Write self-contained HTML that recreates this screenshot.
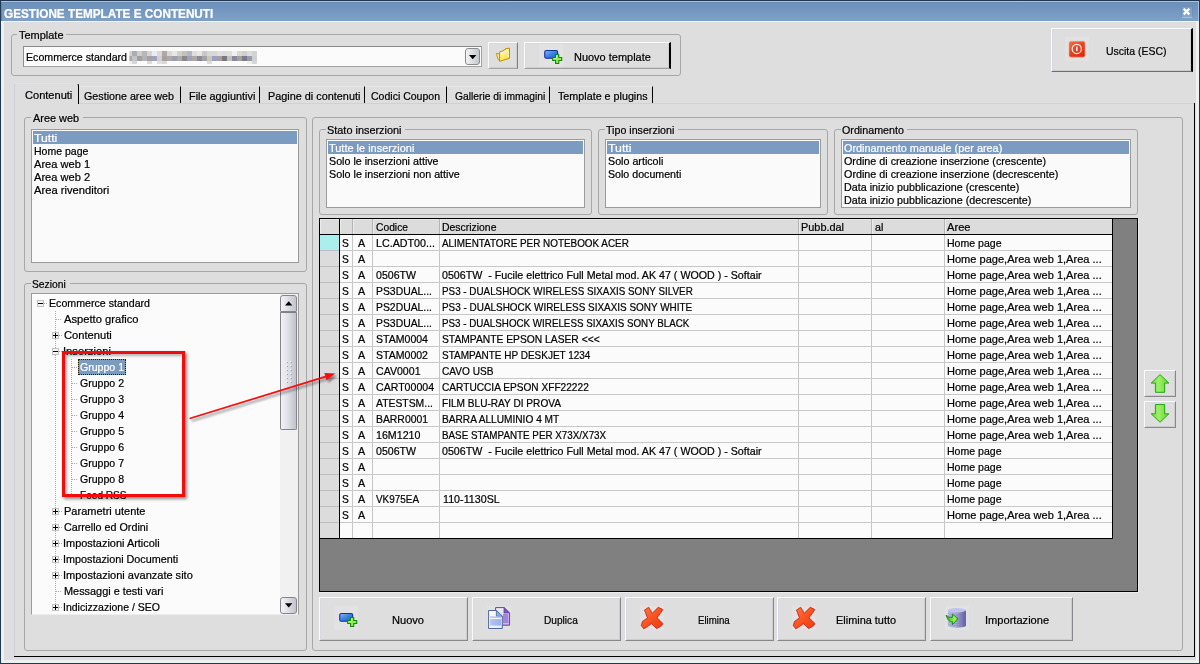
<!DOCTYPE html>
<html lang="it"><head><meta charset="utf-8"><title>Gestione template e contenuti</title>
<style>
html,body{margin:0;padding:0}
body{width:1200px;height:664px;overflow:hidden;background:#dedede;position:relative;font:11px "Liberation Sans",sans-serif;color:#000}
div,span,svg{position:absolute;box-sizing:border-box}
.t{white-space:pre;font:11px/13px "Liberation Sans",sans-serif;transform-origin:0 0;color:#000;-webkit-text-stroke:.22px currentColor}
.w{color:#fff}
.gb{border:1px solid #a7a7a7;border-radius:3px}
.gl{background:#dedede;height:12px}
.lb{background:#fafafa;border:1px solid #9b9b9b}
.sel{background:#7b9bc1;height:13px}
.btn{background:#dedede;border:1px solid;border-color:#fbfbfb #88888c #88888c #fbfbfb;box-shadow:inset 1px 1px 0 #d9d9e3,inset -1px -1px 0 #cdcdcd}
.btn.df{border-right:2px solid #000;border-bottom:1px solid #6e6e6e}
.ib{background:#e2e2e2}
.vl{width:1px;background:#c6c6c6}
.hl{height:1px;background:#c8c8c8}
.k{background:#000}
.tb{height:18px;top:85px;border-top:1px solid #e6e6ee;border-right:1px solid #000}
.dv{width:1px;background-image:linear-gradient(#ababab 50%,transparent 50%);background-size:1px 2px}
.dh{height:1px;background-image:linear-gradient(90deg,#ababab 50%,transparent 50%);background-size:2px 1px}
.pm{width:7px;height:7px;border:1px solid #c2c2c2;background:#f3f3f3}
.pm i{position:absolute;left:0;top:2px;width:5px;height:1px;background:#000}
.pm b{position:absolute;left:2px;top:0;width:1px;height:5px;background:#000}
</style></head><body>
<div style="left:0px;top:0px;width:1200px;height:664px;background:#213853"></div>
<div style="left:1px;top:1px;width:1198px;height:662px;background:#f0f0f1"></div>
<div style="left:4px;top:22px;width:1192px;height:638px;background:#dedede"></div>
<div style="left:1px;top:1px;width:1198px;height:1px;background:#a9c0de"></div>
<div style="left:1px;top:2px;width:1198px;height:19px;background:linear-gradient(#6a8fb9,#7fa1c7)"></div>
<div style="left:1px;top:2px;width:1px;height:19px;background:#5f86b3"></div>
<div style="left:1px;top:21px;width:1198px;height:1px;background:#f1f2f4"></div>
<div style="left:1198px;top:1px;width:1px;height:20px;background:#a9c0de"></div>
<span class="t w" style="left:3.6px;top:7px;transform:scaleX(0.979);font-size:12px;line-height:14px;font-weight:bold;">GESTIONE TEMPLATE E CONTENUTI</span>
<div style="left:1181px;top:6px;width:12px;height:12px;background:rgba(255,255,255,.1);border:1px solid rgba(80,110,150,.35);border-bottom-color:rgba(255,255,255,.25);border-radius:1px"></div>
<svg style="left:1181px;top:6px" width="12" height="12" viewBox="0 0 12 12"><path d="M2.7 2.75 L8.3 8.35 M8.3 2.75 L2.7 8.35" stroke="#fff" stroke-width="2.2" fill="none"/></svg>
<div class="gb" style="left:11px;top:34px;width:670px;height:42px;"></div>
<div class="gl" style="left:17px;top:29px;width:49px;height:12px;"></div>
<span class="t" style="left:19.1px;top:29px;transform:scaleX(0.997);">Template</span>
<div style="left:23px;top:46px;width:459px;height:21px;background:#fbfbfb;border:1px solid;border-color:#8a8a8a #a2a2a2 #a2a2a2 #8e8e8e"></div>
<span class="t" style="left:25.6px;top:51px;transform:scaleX(0.966);">Ecommerce standard</span>
<svg style="left:127px;top:51px" width="130" height="13"><rect x="2.4" y="0" width="2.6" height="5" fill="#d8cfc8"/><rect x="2.4" y="5" width="2.6" height="5" fill="#b0a8a4"/><rect x="2.4" y="10" width="2.6" height="3" fill="#f8ece0"/><rect x="5" y="0" width="5" height="5" fill="#a8aeb2"/><rect x="5" y="5" width="5" height="5" fill="#c0c4c8"/><rect x="5" y="10" width="5" height="3" fill="#d0d8e0"/><rect x="10" y="0" width="5" height="5" fill="#d0cecc"/><rect x="10" y="5" width="5" height="5" fill="#a89c9c"/><rect x="10" y="10" width="5" height="3" fill="#fbfbfb"/><rect x="15" y="0" width="5" height="5" fill="#b4b8b8"/><rect x="15" y="5" width="5" height="5" fill="#b0b4b4"/><rect x="15" y="10" width="5" height="3" fill="#fbfbfb"/><rect x="20" y="0" width="5" height="5" fill="#d4d4d4"/><rect x="20" y="5" width="5" height="5" fill="#a8a09c"/><rect x="20" y="10" width="5" height="3" fill="#dcdcdc"/><rect x="25" y="0" width="5" height="5" fill="#e8ecf0"/><rect x="25" y="5" width="5" height="5" fill="#9ea2bc"/><rect x="25" y="10" width="5" height="3" fill="#fbfbfb"/><rect x="30" y="0" width="5" height="5" fill="#dcd8d8"/><rect x="30" y="5" width="5" height="5" fill="#d0d0d0"/><rect x="30" y="10" width="5" height="3" fill="#e0e0dc"/><rect x="35" y="0" width="5" height="5" fill="#b0a8a8"/><rect x="35" y="5" width="5" height="5" fill="#a8a0a0"/><rect x="35" y="10" width="5" height="3" fill="#dcd8e0"/><rect x="40" y="0" width="5" height="5" fill="#d8d8d8"/><rect x="40" y="5" width="5" height="5" fill="#b0a8a0"/><rect x="40" y="10" width="5" height="3" fill="#fbfbfb"/><rect x="45" y="0" width="5" height="5" fill="#e8e8e0"/><rect x="45" y="5" width="5" height="5" fill="#98a0b0"/><rect x="45" y="10" width="5" height="3" fill="#fbfbfb"/><rect x="50" y="0" width="5" height="5" fill="#d0d0d0"/><rect x="50" y="5" width="5" height="5" fill="#b0aaa8"/><rect x="50" y="10" width="5" height="3" fill="#fbfbfb"/><rect x="55" y="0" width="5" height="5" fill="#c8c0b8"/><rect x="55" y="5" width="5" height="5" fill="#888a88"/><rect x="55" y="10" width="5" height="3" fill="#fbfbfb"/><rect x="60" y="0" width="5" height="5" fill="#b0b8c8"/><rect x="60" y="5" width="5" height="5" fill="#a0a0b8"/><rect x="60" y="10" width="5" height="3" fill="#fbfbfb"/><rect x="65" y="0" width="5" height="5" fill="#e0dce0"/><rect x="65" y="5" width="5" height="5" fill="#b0a8a0"/><rect x="65" y="10" width="5" height="3" fill="#fbfbfb"/><rect x="70" y="0" width="5" height="5" fill="#e8e8e0"/><rect x="70" y="5" width="5" height="5" fill="#8a8a9a"/><rect x="70" y="10" width="5" height="3" fill="#fbfbfb"/><rect x="75" y="0" width="5" height="5" fill="#c8c8c8"/><rect x="75" y="5" width="5" height="5" fill="#a0a4a8"/><rect x="75" y="10" width="5" height="3" fill="#fbfbfb"/><rect x="80" y="0" width="5" height="5" fill="#d8d8d8"/><rect x="80" y="5" width="5" height="5" fill="#c8c8b8"/><rect x="80" y="10" width="5" height="3" fill="#dcdcdc"/><rect x="85" y="0" width="5" height="5" fill="#d8d8d8"/><rect x="85" y="5" width="5" height="5" fill="#9aa0c0"/><rect x="85" y="10" width="5" height="3" fill="#fbfbfb"/><rect x="90" y="0" width="5" height="5" fill="#e0e0e0"/><rect x="90" y="5" width="5" height="5" fill="#a8a098"/><rect x="90" y="10" width="5" height="3" fill="#fbfbfb"/><rect x="95" y="0" width="5" height="5" fill="#dcdce0"/><rect x="95" y="5" width="5" height="5" fill="#787880"/><rect x="95" y="10" width="5" height="3" fill="#fbfbfb"/><rect x="100" y="0" width="5" height="5" fill="#e0e0d8"/><rect x="100" y="5" width="5" height="5" fill="#c0c4b8"/><rect x="100" y="10" width="5" height="3" fill="#fbfbfb"/><rect x="105" y="0" width="5" height="5" fill="#f0f0f0"/><rect x="105" y="5" width="5" height="5" fill="#8a88a0"/><rect x="105" y="10" width="5" height="3" fill="#fbfbfb"/><rect x="110" y="0" width="5" height="5" fill="#d8d8d4"/><rect x="110" y="5" width="5" height="5" fill="#a8a090"/><rect x="110" y="10" width="5" height="3" fill="#fbfbfb"/><rect x="115" y="0" width="5" height="5" fill="#d0d0cc"/><rect x="115" y="5" width="5" height="5" fill="#787890"/><rect x="115" y="10" width="5" height="3" fill="#fbfbfb"/><rect x="120" y="0" width="5" height="5" fill="#e0dcdc"/><rect x="120" y="5" width="5" height="5" fill="#90a0a8"/><rect x="120" y="10" width="5" height="3" fill="#f8ece4"/><rect x="125" y="0" width="5" height="5" fill="#d0d4d4"/><rect x="125" y="5" width="5" height="5" fill="#d0d0d0"/><rect x="125" y="10" width="5" height="3" fill="#d0d8e0"/></svg>
<div style="left:465px;top:48px;width:15px;height:17px;border:1px solid #8a8a8a;border-radius:3px;background:linear-gradient(90deg,#f2f2f6,#dcdce2 50%,#c6c6d0)"></div>
<svg style="left:469px;top:55px" width="8" height="5" viewBox="0 0 8 5"><path d="M0 0H7.4L3.7 4.2Z" fill="#000"/></svg>
<div class="btn" style="left:488px;top:42px;width:30px;height:27px;border-bottom-color:#a6a6a8;border-right-color:#808088"></div>
<svg style="left:495px;top:47px" width="16" height="16" viewBox="0 0 16 16">
<defs><linearGradient id="gF" x1="0" y1="0" x2=".6" y2="1"><stop offset="0" stop-color="#fffbe0"/><stop offset=".5" stop-color="#fff08c"/><stop offset="1" stop-color="#fddc2c"/></linearGradient></defs>
<path d="M1.3 6.3 L4.4 7 L4.4 13.4 L3.1 12.4 Z" fill="#fff2a8" stroke="#c48c0c" stroke-width=".9" stroke-linejoin="round"/>
<path d="M4.6 4.9 L8.7 3.7 L8.7 3 L10.5 2.5 L10.5 1.6 L14.5 1.2 L14.5 11.3 L4.6 14.3 Z" fill="url(#gF)" stroke="#c48c0c" stroke-width="1" stroke-linejoin="round"/>
<path d="M5.7 5.9 L11.6 4.2 L13.3 5.6 L13.4 10.4" fill="none" stroke="#fffbe4" stroke-width=".8" opacity=".9"/>
</svg>
<div class="btn df" style="left:524px;top:42px;width:147px;height:27px;border-bottom-color:#a0a0a2"></div>
<div class="ib" style="left:539px;top:44px;width:24px;height:23px;"></div>
<svg style="left:539px;top:43px" width="24" height="24" viewBox="0 0 24 24">
<defs><linearGradient id="gA" x1="0" y1="0" x2="1" y2="1"><stop offset="0" stop-color="#8ab8f4"/><stop offset=".5" stop-color="#3c80e0"/><stop offset="1" stop-color="#1a5cd4"/></linearGradient></defs>
<rect x="5.75" y="7.55" width="12.9" height="7.7" rx="1.5" fill="url(#gA)" stroke="#10309c" stroke-width="1.1"/>
<path d="M16.55 11.55H19.75V14.55H22.75V17.45H19.75V20.45H16.55V17.45H13.65V14.55H16.55Z" fill="#8cee52" stroke="#0e8a0c" stroke-width="1.1" stroke-linejoin="round"/>
<path d="M17.5 12.6v2.9h-2.8" fill="none" stroke="#c6ffa0" stroke-width=".8" opacity=".8"/>
</svg>
<span class="t" style="left:573.8px;top:51px;transform:scaleX(0.997);">Nuovo template</span>
<div class="btn df" style="left:1051px;top:28px;width:142px;height:44px;"></div>
<div class="ib" style="left:1065px;top:37px;width:24px;height:24px;"></div>
<svg style="left:1065px;top:37px" width="24" height="24" viewBox="0 0 24 24">
<defs><linearGradient id="gP" x1="0" y1="0" x2=".7" y2="1"><stop offset="0" stop-color="#f4714e"/><stop offset=".55" stop-color="#e8431e"/><stop offset="1" stop-color="#d8300c"/></linearGradient></defs>
<rect x="4" y="4.2" width="16" height="16" rx="1.8" fill="url(#gP)" stroke="#f2a894" stroke-width=".6"/>
<circle cx="11.8" cy="11.9" r="4.6" fill="none" stroke="#fff3ee" stroke-width="1.25"/>
<rect x="11.1" y="9.7" width="1.5" height="4.4" fill="#fff3ee"/>
</svg>
<span class="t" style="left:1105.6px;top:45px;transform:scaleX(0.952);">Uscita (ESC)</span>
<div style="left:14px;top:104px;width:1px;height:553px;background:#d0d0dc"></div>
<div style="left:79px;top:103px;width:1116px;height:1px;background:#d0d0dc"></div>
<div class="k" style="left:1194px;top:103px;width:1px;height:554px;"></div>
<div class="k" style="left:14px;top:656px;width:1181px;height:1px;"></div>
<div style="left:14px;top:83px;width:65px;height:21px;background:#dedede;border-top:1px solid #e2e2ec;border-left:1px solid #d0d0dc;border-right:1px solid #000;border-radius:3px 3px 0 0"></div>
<span class="t" style="left:24.6px;top:89px;transform:scaleX(1.005);">Contenuti</span>
<div class="tb" style="left:79px;top:86px;width:102px;height:17px;"></div>
<span class="t" style="left:83.6px;top:90px;transform:scaleX(0.975);">Gestione aree web</span>
<div class="tb" style="left:181px;top:86px;width:79px;height:17px;"></div>
<span class="t" style="left:188.6px;top:90px;transform:scaleX(0.986);">File aggiuntivi</span>
<div class="tb" style="left:260px;top:86px;width:105px;height:17px;"></div>
<span class="t" style="left:267.6px;top:90px;transform:scaleX(0.987);">Pagine di contenuti</span>
<div class="tb" style="left:365px;top:86px;width:82px;height:17px;"></div>
<span class="t" style="left:370.6px;top:90px;transform:scaleX(0.956);">Codici Coupon</span>
<div class="tb" style="left:447px;top:86px;width:103px;height:17px;"></div>
<span class="t" style="left:454.6px;top:90px;transform:scaleX(0.935);">Gallerie di immagini</span>
<div class="tb" style="left:550px;top:86px;width:103px;height:17px;"></div>
<span class="t" style="left:558.0px;top:90px;transform:scaleX(0.977);">Template e plugins</span>
<div class="gb" style="left:24px;top:117px;width:283px;height:155px;"></div>
<div class="gl" style="left:31px;top:111px;width:52px;height:12px;"></div>
<span class="t" style="left:32.6px;top:112px;transform:scaleX(0.99);">Aree web</span>
<div class="lb" style="left:31px;top:129px;width:268px;height:134px;"></div>
<div class="sel" style="left:33px;top:131px;width:264px;height:13px;"></div>
<span class="t w" style="left:34.2px;top:132px;transform:scaleX(1.11);">Tutti</span>
<span class="t" style="left:34.2px;top:145px;transform:scaleX(0.957);">Home page</span>
<span class="t" style="left:34.2px;top:158px;transform:scaleX(1.009);">Area web 1</span>
<span class="t" style="left:34.2px;top:171px;transform:scaleX(1.009);">Area web 2</span>
<span class="t" style="left:34.2px;top:184px;transform:scaleX(1.016);">Area rivenditori</span>
<div class="gb" style="left:24px;top:283px;width:283px;height:368px;"></div>
<div class="gl" style="left:31px;top:277px;width:39px;height:12px;"></div>
<span class="t" style="left:32.1px;top:278px;transform:scaleX(0.937);">Sezioni</span>
<div class="lb" style="left:31px;top:293px;width:268px;height:322px;background:#fbfbfb;border-bottom-color:#ededed"></div>
<div style="left:280px;top:294px;width:18px;height:320px;background:#f1f1f1"></div>
<div style="left:280px;top:295px;width:17px;height:17px;border:1px solid #86868a;border-radius:3px 3px 1px 1px;background:linear-gradient(90deg,#f4f4f8,#dcdce2 50%,#c4c4ce)"></div>
<svg style="left:285px;top:301px" width="8" height="5" viewBox="0 0 8 5"><path d="M0 4.4H7.4L3.7 0.2Z" fill="#000"/></svg>
<div style="left:280px;top:597px;width:17px;height:17px;border:1px solid #86868a;border-radius:3px;background:linear-gradient(90deg,#f4f4f8,#dcdce2 50%,#c4c4ce)"></div>
<svg style="left:285px;top:603px" width="8" height="5" viewBox="0 0 8 5"><path d="M0 0.2H7.4L3.7 4.4Z" fill="#000"/></svg>
<div style="left:280px;top:312px;width:17px;height:118px;border:1px solid #86868a;border-top:1px solid #808084;border-radius:1px 1px 2px 2px;background:linear-gradient(90deg,#f2f2f6,#e0e0e8 45%,#c2c2cc)"></div>
<svg style="left:286px;top:361px" width="7" height="23" shape-rendering="crispEdges"><rect x="0" y="0" width="1" height="1" fill="#fff"/><rect x="1" y="1" width="1" height="1" fill="#9a9aa4"/><rect x="4" y="0" width="1" height="1" fill="#fff"/><rect x="5" y="1" width="1" height="1" fill="#9a9aa4"/><rect x="0" y="4" width="1" height="1" fill="#fff"/><rect x="1" y="5" width="1" height="1" fill="#9a9aa4"/><rect x="4" y="4" width="1" height="1" fill="#fff"/><rect x="5" y="5" width="1" height="1" fill="#9a9aa4"/><rect x="0" y="8" width="1" height="1" fill="#fff"/><rect x="1" y="9" width="1" height="1" fill="#9a9aa4"/><rect x="4" y="8" width="1" height="1" fill="#fff"/><rect x="5" y="9" width="1" height="1" fill="#9a9aa4"/><rect x="0" y="12" width="1" height="1" fill="#fff"/><rect x="1" y="13" width="1" height="1" fill="#9a9aa4"/><rect x="4" y="12" width="1" height="1" fill="#fff"/><rect x="5" y="13" width="1" height="1" fill="#9a9aa4"/><rect x="0" y="16" width="1" height="1" fill="#fff"/><rect x="1" y="17" width="1" height="1" fill="#9a9aa4"/><rect x="4" y="16" width="1" height="1" fill="#fff"/><rect x="5" y="17" width="1" height="1" fill="#9a9aa4"/><rect x="0" y="20" width="1" height="1" fill="#fff"/><rect x="1" y="21" width="1" height="1" fill="#9a9aa4"/><rect x="4" y="20" width="1" height="1" fill="#fff"/><rect x="5" y="21" width="1" height="1" fill="#9a9aa4"/></svg>
<div class="dv" style="left:55px;top:311px;width:1px;height:297px;"></div>
<div class="dv" style="left:71px;top:359px;width:1px;height:137px;"></div>
<div class="dh" style="left:44px;top:303px;width:3px;height:1px;"></div>
<div class="pm" style="left:37px;top:300px;width:7px;height:7px;"><i></i></div>
<span class="t" style="left:48.6px;top:297px;transform:scaleX(0.966);">Ecommerce standard</span>
<div class="dh" style="left:56px;top:319px;width:6px;height:1px;"></div>
<span class="t" style="left:64.1px;top:313px;transform:scaleX(1.016);">Aspetto grafico</span>
<div class="dh" style="left:59px;top:335px;width:3px;height:1px;"></div>
<div class="pm" style="left:52px;top:332px;width:7px;height:7px;"><i></i><b></b></div>
<span class="t" style="left:64.1px;top:329px;transform:scaleX(1.016);">Contenuti</span>
<div class="dh" style="left:59px;top:351px;width:3px;height:1px;"></div>
<div class="pm" style="left:52px;top:348px;width:7px;height:7px;"><i></i></div>
<span class="t" style="left:63.08px;top:345px;transform:scaleX(1.017);">Inserzioni</span>
<div class="dh" style="left:72px;top:367px;width:6px;height:1px;"></div>
<div style="left:78px;top:359px;width:48px;height:16px;background:#7b9bc1;border:1px dotted #2a1a00"></div>
<span class="t w" style="left:79.6px;top:361px;transform:scaleX(0.96);">Gruppo 1</span>
<div class="dh" style="left:72px;top:383px;width:6px;height:1px;"></div>
<span class="t" style="left:79.6px;top:377px;transform:scaleX(0.96);">Gruppo 2</span>
<div class="dh" style="left:72px;top:399px;width:6px;height:1px;"></div>
<span class="t" style="left:79.6px;top:393px;transform:scaleX(0.96);">Gruppo 3</span>
<div class="dh" style="left:72px;top:415px;width:6px;height:1px;"></div>
<span class="t" style="left:79.6px;top:409px;transform:scaleX(0.96);">Gruppo 4</span>
<div class="dh" style="left:72px;top:431px;width:6px;height:1px;"></div>
<span class="t" style="left:79.6px;top:425px;transform:scaleX(0.96);">Gruppo 5</span>
<div class="dh" style="left:72px;top:447px;width:6px;height:1px;"></div>
<span class="t" style="left:79.6px;top:441px;transform:scaleX(0.96);">Gruppo 6</span>
<div class="dh" style="left:72px;top:463px;width:6px;height:1px;"></div>
<span class="t" style="left:79.6px;top:457px;transform:scaleX(0.96);">Gruppo 7</span>
<div class="dh" style="left:72px;top:479px;width:6px;height:1px;"></div>
<span class="t" style="left:79.6px;top:473px;transform:scaleX(0.96);">Gruppo 8</span>
<div class="dh" style="left:72px;top:495px;width:6px;height:1px;"></div>
<span class="t" style="left:79.6px;top:489px;transform:scaleX(0.918);">Feed RSS</span>
<div class="dh" style="left:59px;top:511px;width:3px;height:1px;"></div>
<div class="pm" style="left:52px;top:508px;width:7px;height:7px;"><i></i><b></b></div>
<span class="t" style="left:64.1px;top:505px;transform:scaleX(1.002);">Parametri utente</span>
<div class="dh" style="left:59px;top:527px;width:3px;height:1px;"></div>
<div class="pm" style="left:52px;top:524px;width:7px;height:7px;"><i></i><b></b></div>
<span class="t" style="left:64.1px;top:521px;transform:scaleX(0.976);">Carrello ed Ordini</span>
<div class="dh" style="left:59px;top:543px;width:3px;height:1px;"></div>
<div class="pm" style="left:52px;top:540px;width:7px;height:7px;"><i></i><b></b></div>
<span class="t" style="left:63.1px;top:537px;transform:scaleX(0.995);">Impostazioni Articoli</span>
<div class="dh" style="left:59px;top:559px;width:3px;height:1px;"></div>
<div class="pm" style="left:52px;top:556px;width:7px;height:7px;"><i></i><b></b></div>
<span class="t" style="left:63.12px;top:553px;transform:scaleX(0.981);">Impostazioni Documenti</span>
<div class="dh" style="left:59px;top:575px;width:3px;height:1px;"></div>
<div class="pm" style="left:52px;top:572px;width:7px;height:7px;"><i></i><b></b></div>
<span class="t" style="left:63.1px;top:569px;transform:scaleX(1.001);">Impostazioni avanzate sito</span>
<div class="dh" style="left:56px;top:591px;width:6px;height:1px;"></div>
<span class="t" style="left:64.1px;top:585px;transform:scaleX(0.991);">Messaggi e testi vari</span>
<div class="dh" style="left:59px;top:607px;width:3px;height:1px;"></div>
<div class="pm" style="left:52px;top:604px;width:7px;height:7px;"><i></i><b></b></div>
<span class="t" style="left:63.14px;top:601px;transform:scaleX(0.956);">Indicizzazione / SEO</span>
<div class="gb" style="left:312px;top:117px;width:871px;height:534px;"></div>
<div class="gb" style="left:319px;top:129px;width:273px;height:86px;"></div>
<div class="gl" style="left:326px;top:123px;width:79px;height:12px;"></div>
<span class="t" style="left:326.9px;top:124px;transform:scaleX(0.991);">Stato inserzioni</span>
<div class="lb" style="left:326px;top:139px;width:259px;height:69px;"></div>
<div class="sel" style="left:328px;top:141px;width:255px;height:13px;"></div>
<span class="t w" style="left:329.0px;top:142px;transform:scaleX(0.995);">Tutte le inserzioni</span>
<span class="t" style="left:329.0px;top:155px;transform:scaleX(0.974);">Solo le inserzioni attive</span>
<span class="t" style="left:329.0px;top:168px;transform:scaleX(0.977);">Solo le inserzioni non attive</span>
<div class="gb" style="left:598px;top:129px;width:230px;height:86px;"></div>
<div class="gl" style="left:605px;top:123px;width:73px;height:12px;"></div>
<span class="t" style="left:605.8px;top:124px;transform:scaleX(0.969);">Tipo inserzioni</span>
<div class="lb" style="left:605px;top:139px;width:216px;height:69px;"></div>
<div class="sel" style="left:607px;top:141px;width:212px;height:13px;"></div>
<span class="t w" style="left:608.0px;top:142px;transform:scaleX(1.12);">Tutti</span>
<span class="t" style="left:608.0px;top:155px;transform:scaleX(0.973);">Solo articoli</span>
<span class="t" style="left:608.0px;top:168px;transform:scaleX(0.967);">Solo documenti</span>
<div class="gb" style="left:834px;top:129px;width:304px;height:86px;"></div>
<div class="gl" style="left:841px;top:123px;width:66px;height:12px;"></div>
<span class="t" style="left:842.3px;top:124px;transform:scaleX(0.974);">Ordinamento</span>
<div class="lb" style="left:841px;top:139px;width:290px;height:69px;"></div>
<div class="sel" style="left:843px;top:141px;width:286px;height:13px;"></div>
<span class="t w" style="left:844.1px;top:142px;transform:scaleX(0.988);">Ordinamento manuale (per area)</span>
<span class="t" style="left:844.1px;top:155px;transform:scaleX(0.978);">Ordine di creazione inserzione (crescente)</span>
<span class="t" style="left:844.1px;top:168px;transform:scaleX(0.979);">Ordine di creazione inserzione (decrescente)</span>
<span class="t" style="left:844.1px;top:181px;transform:scaleX(0.975);">Data inizio pubblicazione (crescente)</span>
<span class="t" style="left:844.1px;top:194px;transform:scaleX(0.976);">Data inizio pubblicazione (decrescente)</span>
<div style="left:319px;top:218px;width:819px;height:374px;background:#808080;border:1px solid #000"></div>
<div style="left:319px;top:592px;width:820px;height:1px;background:#ececec"></div>
<div style="left:1138px;top:218px;width:1px;height:375px;background:#ececec"></div>
<div style="left:320px;top:219px;width:792px;height:319px;background:#fbfbfb"></div>
<div style="left:320px;top:219px;width:792px;height:15px;background:#dcdcdc"></div>
<div style="left:320px;top:235px;width:19px;height:303px;background:#dcdcdc"></div>
<div style="left:320px;top:235px;width:19px;height:15px;background:#aaeeee"></div>
<div style="left:320px;top:219px;width:1px;height:15px;background:#ececec"></div>
<div style="left:340px;top:219px;width:1px;height:15px;background:#ececec"></div>
<div style="left:353px;top:219px;width:1px;height:15px;background:#ececec"></div>
<div style="left:373px;top:219px;width:1px;height:15px;background:#ececec"></div>
<div style="left:440px;top:219px;width:1px;height:15px;background:#ececec"></div>
<div style="left:799px;top:219px;width:1px;height:15px;background:#ececec"></div>
<div style="left:872px;top:219px;width:1px;height:15px;background:#ececec"></div>
<div style="left:945px;top:219px;width:1px;height:15px;background:#ececec"></div>
<div style="left:320px;top:219px;width:792px;height:1px;background:#e8e8e8"></div>
<div class="vl" style="left:352px;top:219px;width:1px;height:319px;"></div>
<div class="vl" style="left:372px;top:219px;width:1px;height:319px;"></div>
<div class="vl" style="left:439px;top:219px;width:1px;height:319px;"></div>
<div class="vl" style="left:798px;top:219px;width:1px;height:319px;"></div>
<div class="vl" style="left:871px;top:219px;width:1px;height:319px;"></div>
<div class="vl" style="left:944px;top:219px;width:1px;height:319px;"></div>
<div style="left:352px;top:219px;width:1px;height:15px;background:#b4b4b4"></div>
<div style="left:372px;top:219px;width:1px;height:15px;background:#b4b4b4"></div>
<div style="left:439px;top:219px;width:1px;height:15px;background:#b4b4b4"></div>
<div style="left:798px;top:219px;width:1px;height:15px;background:#b4b4b4"></div>
<div style="left:871px;top:219px;width:1px;height:15px;background:#b4b4b4"></div>
<div style="left:944px;top:219px;width:1px;height:15px;background:#b4b4b4"></div>
<div class="hl" style="left:340px;top:250px;width:772px;height:1px;"></div>
<div style="left:320px;top:250px;width:19px;height:1px;background:#bcbcc4"></div>
<div class="hl" style="left:340px;top:266px;width:772px;height:1px;"></div>
<div style="left:320px;top:266px;width:19px;height:1px;background:#bcbcc4"></div>
<div class="hl" style="left:340px;top:282px;width:772px;height:1px;"></div>
<div style="left:320px;top:282px;width:19px;height:1px;background:#bcbcc4"></div>
<div class="hl" style="left:340px;top:298px;width:772px;height:1px;"></div>
<div style="left:320px;top:298px;width:19px;height:1px;background:#bcbcc4"></div>
<div class="hl" style="left:340px;top:314px;width:772px;height:1px;"></div>
<div style="left:320px;top:314px;width:19px;height:1px;background:#bcbcc4"></div>
<div class="hl" style="left:340px;top:330px;width:772px;height:1px;"></div>
<div style="left:320px;top:330px;width:19px;height:1px;background:#bcbcc4"></div>
<div class="hl" style="left:340px;top:346px;width:772px;height:1px;"></div>
<div style="left:320px;top:346px;width:19px;height:1px;background:#bcbcc4"></div>
<div class="hl" style="left:340px;top:362px;width:772px;height:1px;"></div>
<div style="left:320px;top:362px;width:19px;height:1px;background:#bcbcc4"></div>
<div class="hl" style="left:340px;top:378px;width:772px;height:1px;"></div>
<div style="left:320px;top:378px;width:19px;height:1px;background:#bcbcc4"></div>
<div class="hl" style="left:340px;top:394px;width:772px;height:1px;"></div>
<div style="left:320px;top:394px;width:19px;height:1px;background:#bcbcc4"></div>
<div class="hl" style="left:340px;top:410px;width:772px;height:1px;"></div>
<div style="left:320px;top:410px;width:19px;height:1px;background:#bcbcc4"></div>
<div class="hl" style="left:340px;top:426px;width:772px;height:1px;"></div>
<div style="left:320px;top:426px;width:19px;height:1px;background:#bcbcc4"></div>
<div class="hl" style="left:340px;top:442px;width:772px;height:1px;"></div>
<div style="left:320px;top:442px;width:19px;height:1px;background:#bcbcc4"></div>
<div class="hl" style="left:340px;top:458px;width:772px;height:1px;"></div>
<div style="left:320px;top:458px;width:19px;height:1px;background:#bcbcc4"></div>
<div class="hl" style="left:340px;top:474px;width:772px;height:1px;"></div>
<div style="left:320px;top:474px;width:19px;height:1px;background:#bcbcc4"></div>
<div class="hl" style="left:340px;top:490px;width:772px;height:1px;"></div>
<div style="left:320px;top:490px;width:19px;height:1px;background:#bcbcc4"></div>
<div class="hl" style="left:340px;top:506px;width:772px;height:1px;"></div>
<div style="left:320px;top:506px;width:19px;height:1px;background:#bcbcc4"></div>
<div class="hl" style="left:340px;top:522px;width:772px;height:1px;"></div>
<div style="left:320px;top:522px;width:19px;height:1px;background:#bcbcc4"></div>
<div class="k" style="left:339px;top:219px;width:1px;height:320px;"></div>
<div class="k" style="left:320px;top:234px;width:793px;height:1px;"></div>
<div class="k" style="left:1112px;top:219px;width:1px;height:320px;"></div>
<div class="k" style="left:320px;top:538px;width:793px;height:1px;"></div>
<span class="t" style="left:375.6px;top:221px;transform:scaleX(0.935);">Codice</span>
<span class="t" style="left:442.2px;top:221px;transform:scaleX(0.947);">Descrizione</span>
<span class="t" style="left:800.9px;top:221px;transform:scaleX(0.991);">Pubb.dal</span>
<span class="t" style="left:874.6px;top:221px;transform:scaleX(0.973);">al</span>
<span class="t" style="left:947.1px;top:221px;transform:scaleX(1.012);">Aree</span>
<span class="t" style="left:342.2px;top:237px;transform:scaleX(0.929);">S</span>
<span class="t" style="left:358.0px;top:237px;transform:scaleX(0.975);">A</span>
<span class="t" style="left:375.6px;top:237px;transform:scaleX(0.974);">LC.ADT00...</span>
<span class="t" style="left:441.9px;top:237px;transform:scaleX(0.899);">ALIMENTATORE PER NOTEBOOK ACER</span>
<span class="t" style="left:947.1px;top:237px;transform:scaleX(0.959);">Home page</span>
<span class="t" style="left:342.2px;top:253px;transform:scaleX(0.929);">S</span>
<span class="t" style="left:358.0px;top:253px;transform:scaleX(0.975);">A</span>
<span class="t" style="left:947.1px;top:253px;transform:scaleX(1.004);">Home page,Area web 1,Area ...</span>
<span class="t" style="left:342.2px;top:269px;transform:scaleX(0.929);">S</span>
<span class="t" style="left:358.0px;top:269px;transform:scaleX(0.975);">A</span>
<span class="t" style="left:375.6px;top:269px;transform:scaleX(0.962);">0506TW</span>
<span class="t" style="left:441.9px;top:269px;transform:scaleX(0.97);">0506TW  - Fucile elettrico Full Metal mod. AK 47 ( WOOD ) - Softair</span>
<span class="t" style="left:947.1px;top:269px;transform:scaleX(1.004);">Home page,Area web 1,Area ...</span>
<span class="t" style="left:342.2px;top:285px;transform:scaleX(0.929);">S</span>
<span class="t" style="left:358.0px;top:285px;transform:scaleX(0.975);">A</span>
<span class="t" style="left:375.6px;top:285px;transform:scaleX(0.944);">PS3DUAL...</span>
<span class="t" style="left:441.9px;top:285px;transform:scaleX(0.895);">PS3 - DUALSHOCK WIRELESS SIXAXIS SONY SILVER</span>
<span class="t" style="left:947.1px;top:285px;transform:scaleX(1.004);">Home page,Area web 1,Area ...</span>
<span class="t" style="left:342.2px;top:301px;transform:scaleX(0.929);">S</span>
<span class="t" style="left:358.0px;top:301px;transform:scaleX(0.975);">A</span>
<span class="t" style="left:375.6px;top:301px;transform:scaleX(0.944);">PS2DUAL...</span>
<span class="t" style="left:441.9px;top:301px;transform:scaleX(0.902);">PS3 - DUALSHOCK WIRELESS SIXAXIS SONY WHITE</span>
<span class="t" style="left:947.1px;top:301px;transform:scaleX(1.004);">Home page,Area web 1,Area ...</span>
<span class="t" style="left:342.2px;top:317px;transform:scaleX(0.929);">S</span>
<span class="t" style="left:358.0px;top:317px;transform:scaleX(0.975);">A</span>
<span class="t" style="left:375.6px;top:317px;transform:scaleX(0.944);">PS3DUAL...</span>
<span class="t" style="left:441.9px;top:317px;transform:scaleX(0.89);">PS3 - DUALSHOCK WIRELESS SIXAXIS SONY BLACK</span>
<span class="t" style="left:947.1px;top:317px;transform:scaleX(1.004);">Home page,Area web 1,Area ...</span>
<span class="t" style="left:342.2px;top:333px;transform:scaleX(0.929);">S</span>
<span class="t" style="left:358.0px;top:333px;transform:scaleX(0.975);">A</span>
<span class="t" style="left:375.6px;top:333px;transform:scaleX(0.959);">STAM0004</span>
<span class="t" style="left:441.9px;top:333px;transform:scaleX(0.935);">STAMPANTE EPSON LASER &lt;&lt;&lt;</span>
<span class="t" style="left:947.1px;top:333px;transform:scaleX(1.004);">Home page,Area web 1,Area ...</span>
<span class="t" style="left:342.2px;top:349px;transform:scaleX(0.929);">S</span>
<span class="t" style="left:358.0px;top:349px;transform:scaleX(0.975);">A</span>
<span class="t" style="left:375.6px;top:349px;transform:scaleX(0.959);">STAM0002</span>
<span class="t" style="left:441.9px;top:349px;transform:scaleX(0.907);">STAMPANTE HP DESKJET 1234</span>
<span class="t" style="left:947.1px;top:349px;transform:scaleX(1.004);">Home page,Area web 1,Area ...</span>
<span class="t" style="left:342.2px;top:365px;transform:scaleX(0.929);">S</span>
<span class="t" style="left:358.0px;top:365px;transform:scaleX(0.975);">A</span>
<span class="t" style="left:375.6px;top:365px;transform:scaleX(0.962);">CAV0001</span>
<span class="t" style="left:441.9px;top:365px;transform:scaleX(0.919);">CAVO USB</span>
<span class="t" style="left:947.1px;top:365px;transform:scaleX(1.004);">Home page,Area web 1,Area ...</span>
<span class="t" style="left:342.2px;top:381px;transform:scaleX(0.929);">S</span>
<span class="t" style="left:358.0px;top:381px;transform:scaleX(0.975);">A</span>
<span class="t" style="left:375.6px;top:381px;transform:scaleX(0.962);">CART00004</span>
<span class="t" style="left:441.9px;top:381px;transform:scaleX(0.921);">CARTUCCIA EPSON XFF22222</span>
<span class="t" style="left:947.1px;top:381px;transform:scaleX(1.004);">Home page,Area web 1,Area ...</span>
<span class="t" style="left:342.2px;top:397px;transform:scaleX(0.929);">S</span>
<span class="t" style="left:358.0px;top:397px;transform:scaleX(0.975);">A</span>
<span class="t" style="left:375.6px;top:397px;transform:scaleX(0.944);">ATESTSM...</span>
<span class="t" style="left:441.9px;top:397px;transform:scaleX(0.918);">FILM BLU-RAY DI PROVA</span>
<span class="t" style="left:947.1px;top:397px;transform:scaleX(1.004);">Home page,Area web 1,Area ...</span>
<span class="t" style="left:342.2px;top:413px;transform:scaleX(0.929);">S</span>
<span class="t" style="left:358.0px;top:413px;transform:scaleX(0.975);">A</span>
<span class="t" style="left:375.6px;top:413px;transform:scaleX(0.945);">BARR0001</span>
<span class="t" style="left:441.9px;top:413px;transform:scaleX(0.922);">BARRA ALLUMINIO 4 MT</span>
<span class="t" style="left:947.1px;top:413px;transform:scaleX(1.004);">Home page,Area web 1,Area ...</span>
<span class="t" style="left:342.2px;top:429px;transform:scaleX(0.929);">S</span>
<span class="t" style="left:358.0px;top:429px;transform:scaleX(0.975);">A</span>
<span class="t" style="left:375.6px;top:429px;transform:scaleX(0.97);">16M1210</span>
<span class="t" style="left:441.9px;top:429px;transform:scaleX(0.894);">BASE STAMPANTE PER X73X/X73X</span>
<span class="t" style="left:947.1px;top:429px;transform:scaleX(1.004);">Home page,Area web 1,Area ...</span>
<span class="t" style="left:342.2px;top:445px;transform:scaleX(0.929);">S</span>
<span class="t" style="left:358.0px;top:445px;transform:scaleX(0.975);">A</span>
<span class="t" style="left:375.6px;top:445px;transform:scaleX(0.962);">0506TW</span>
<span class="t" style="left:441.9px;top:445px;transform:scaleX(0.97);">0506TW  - Fucile elettrico Full Metal mod. AK 47 ( WOOD ) - Softair</span>
<span class="t" style="left:947.1px;top:445px;transform:scaleX(0.959);">Home page</span>
<span class="t" style="left:342.2px;top:461px;transform:scaleX(0.929);">S</span>
<span class="t" style="left:358.0px;top:461px;transform:scaleX(0.975);">A</span>
<span class="t" style="left:947.1px;top:461px;transform:scaleX(0.959);">Home page</span>
<span class="t" style="left:342.2px;top:477px;transform:scaleX(0.929);">S</span>
<span class="t" style="left:358.0px;top:477px;transform:scaleX(0.975);">A</span>
<span class="t" style="left:947.1px;top:477px;transform:scaleX(0.959);">Home page</span>
<span class="t" style="left:342.2px;top:493px;transform:scaleX(0.929);">S</span>
<span class="t" style="left:358.0px;top:493px;transform:scaleX(0.975);">A</span>
<span class="t" style="left:375.6px;top:493px;transform:scaleX(0.902);">VK975EA</span>
<span class="t" style="left:443.1px;top:493px;transform:scaleX(0.974);">110-1130SL</span>
<span class="t" style="left:947.1px;top:493px;transform:scaleX(0.959);">Home page</span>
<span class="t" style="left:342.2px;top:509px;transform:scaleX(0.929);">S</span>
<span class="t" style="left:358.0px;top:509px;transform:scaleX(0.975);">A</span>
<span class="t" style="left:947.1px;top:509px;transform:scaleX(1.004);">Home page,Area web 1,Area ...</span>
<div class="btn" style="left:319px;top:597px;width:149px;height:44px;"></div>
<div class="ib" style="left:334px;top:606px;width:24px;height:24px;"></div>
<span class="t" style="left:391.9px;top:614px;transform:scaleX(1.007);">Nuovo</span>
<div class="btn" style="left:472px;top:597px;width:149px;height:44px;"></div>
<div class="ib" style="left:487px;top:606px;width:24px;height:24px;"></div>
<span class="t" style="left:543.9px;top:614px;transform:scaleX(0.921);">Duplica</span>
<div class="btn" style="left:625px;top:597px;width:149px;height:44px;"></div>
<div class="ib" style="left:640px;top:606px;width:24px;height:24px;"></div>
<span class="t" style="left:698.0px;top:614px;transform:scaleX(0.88);">Elimina</span>
<div class="btn" style="left:777px;top:597px;width:149px;height:44px;"></div>
<div class="ib" style="left:792px;top:606px;width:24px;height:24px;"></div>
<span class="t" style="left:835.9px;top:614px;transform:scaleX(0.992);">Elimina tutto</span>
<div class="btn" style="left:930px;top:597px;width:143px;height:44px;"></div>
<div class="ib" style="left:945px;top:606px;width:24px;height:24px;"></div>
<span class="t" style="left:984.89px;top:614px;transform:scaleX(1.008);">Importazione</span>
<svg style="left:334px;top:606px" width="24" height="24" viewBox="0 0 24 24">
<defs><linearGradient id="gB" x1="0" y1="0" x2="1" y2="1"><stop offset="0" stop-color="#8ab8f4"/><stop offset=".5" stop-color="#3c80e0"/><stop offset="1" stop-color="#1a5cd4"/></linearGradient></defs>
<rect x="5.75" y="7.55" width="12.9" height="7.7" rx="1.5" fill="url(#gB)" stroke="#10309c" stroke-width="1.1"/>
<path d="M16.55 11.55H19.75V14.55H22.75V17.45H19.75V20.45H16.55V17.45H13.65V14.55H16.55Z" fill="#8cee52" stroke="#0e8a0c" stroke-width="1.1" stroke-linejoin="round"/>
<path d="M17.5 12.6v2.9h-2.8" fill="none" stroke="#c6ffa0" stroke-width=".8" opacity=".8"/>
</svg>
<svg style="left:487px;top:606px" width="24" height="24" viewBox="0 0 24 24">
<defs><linearGradient id="gD1" x1="0" y1="0" x2="0" y2="1"><stop offset="0" stop-color="#f0f0f0"/><stop offset=".3" stop-color="#e6e0f2"/><stop offset="1" stop-color="#c4aee6"/></linearGradient>
<linearGradient id="gD2" x1="0" y1="0" x2="1" y2="1"><stop offset="0" stop-color="#ffffff"/><stop offset="1" stop-color="#dfe8fb"/></linearGradient>
<linearGradient id="gD3" x1="0" y1="0" x2="1" y2="0"><stop offset="0" stop-color="#b6c2ee"/><stop offset="1" stop-color="#9eb0e4"/></linearGradient></defs>
<path d="M8.6 1.6H17L22.6 7V19.2H8.6Z" fill="url(#gD1)" stroke="#6a3fa0" stroke-width="1" stroke-linejoin="round"/>
<path d="M17 1.6V7H22.6Z" fill="#7458c4" stroke="#6a3fa0" stroke-width=".8" stroke-linejoin="round"/>
<rect x="16" y="7.8" width="5.4" height="9.2" fill="#a385d6"/>
<path d="M1.6 4.5H9.4L15.3 10.3V22.5H1.6Z" fill="url(#gD2)" stroke="#4e669c" stroke-width="1" stroke-linejoin="round"/>
<path d="M9.4 4.5V10.3H15.3Z" fill="#74bcec" stroke="#4e669c" stroke-width=".8" stroke-linejoin="round"/>
<rect x="3.1" y="10.4" width="10.9" height="1.5" fill="#b8c0ee"/>
<rect x="3.1" y="13.1" width="10.9" height="6.5" fill="url(#gD3)"/>
</svg>
<svg style="left:640px;top:606px" width="24" height="24" viewBox="0 0 24 24">
<defs><linearGradient id="gX1" x1="0" y1="0" x2="1" y2="1"><stop offset="0" stop-color="#ff7a4a"/><stop offset=".55" stop-color="#f8501e"/><stop offset="1" stop-color="#ea3c12"/></linearGradient></defs>
<path d="M4.3 4.3L8.6 1.3Q10.6 4.4 12.4 7.4Q15.2 4 18.3 1.3L22.8 3.6Q20 8 16.9 11.9Q20 14.4 22.8 17.4Q22.4 19.4 20.5 20.5L16.5 22.6Q14 20 11.5 17.4Q8 20.6 3.8 22.8L1.3 19.6L2.4 15.6Q5 13.6 7.6 11.9Q6.2 9 5.4 6.1Z" fill="url(#gX1)" stroke="#cc200c" stroke-width=".9" stroke-linejoin="round"/>
</svg>
<svg style="left:792px;top:606px" width="24" height="24" viewBox="0 0 24 24">
<defs><linearGradient id="gX2" x1="0" y1="0" x2="1" y2="1"><stop offset="0" stop-color="#ff7a4a"/><stop offset=".55" stop-color="#f8501e"/><stop offset="1" stop-color="#ea3c12"/></linearGradient></defs>
<path d="M4.3 4.3L8.6 1.3Q10.6 4.4 12.4 7.4Q15.2 4 18.3 1.3L22.8 3.6Q20 8 16.9 11.9Q20 14.4 22.8 17.4Q22.4 19.4 20.5 20.5L16.5 22.6Q14 20 11.5 17.4Q8 20.6 3.8 22.8L1.3 19.6L2.4 15.6Q5 13.6 7.6 11.9Q6.2 9 5.4 6.1Z" fill="url(#gX2)" stroke="#cc200c" stroke-width=".9" stroke-linejoin="round"/>
</svg>
<svg style="left:945px;top:606px" width="24" height="24" viewBox="0 0 24 24">
<defs><linearGradient id="gC" x1="0" y1="0" x2="1" y2="0"><stop offset="0" stop-color="#bcbcea"/><stop offset=".45" stop-color="#a6a6da"/><stop offset=".8" stop-color="#7a7ab6"/><stop offset="1" stop-color="#5a5a9a"/></linearGradient>
<linearGradient id="gG" x1="0" y1="0" x2="1" y2="0"><stop offset="0" stop-color="#22b00c"/><stop offset=".75" stop-color="#9cfa5c"/><stop offset="1" stop-color="#58d828"/></linearGradient></defs>
<path d="M2.9 4.2V19.4a9 2.4 0 0 0 18 0V4.2z" fill="url(#gC)"/>
<ellipse cx="11.9" cy="4.2" rx="9" ry="2.2" fill="#c2c2ee"/>
<path d="M2.9 7a9 2.2 0 0 0 18 0M2.9 9.1a9 2.2 0 0 0 18 0M2.9 11.2a9 2.2 0 0 0 18 0M2.9 13.3a9 2.2 0 0 0 18 0M2.9 15.4a9 2.2 0 0 0 18 0M2.9 17.5a9 2.2 0 0 0 18 0" fill="none" stroke="#6c6cae" stroke-width=".55" opacity=".55"/>
<path d="M1.1 9C2.4 11 4.6 11.6 7.4 11.4V8.1L12.9 12.6L7.4 18.7V15.6C4.6 16 2.6 14.4 1.1 9Z" fill="url(#gG)" stroke="#128a08" stroke-width=".9" stroke-linejoin="round"/>
</svg>
<div class="btn" style="left:1144px;top:370px;width:32px;height:27px;"></div>
<div class="btn" style="left:1144px;top:401px;width:32px;height:27px;"></div>
<svg style="left:1148px;top:372px" width="24" height="22" viewBox="0 0 24 22">
<defs><linearGradient id="gU" x1="0" y1="0" x2="1" y2="0"><stop offset="0" stop-color="#70de3c"/><stop offset=".42" stop-color="#9cf066"/><stop offset="1" stop-color="#62d630"/></linearGradient></defs>
<path d="M12.05 2.6L20.9 11.1H16.7V20.3H7.4V11.1H3.2Z" fill="url(#gU)" stroke="#22a616" stroke-width="1" stroke-linejoin="miter"/></svg>
<svg style="left:1148px;top:403px" width="24" height="22" viewBox="0 0 24 22">
<defs><linearGradient id="gW" x1="0" y1="0" x2="1" y2="0"><stop offset="0" stop-color="#70de3c"/><stop offset=".42" stop-color="#9cf066"/><stop offset="1" stop-color="#62d630"/></linearGradient></defs>
<path d="M12.05 19.2L20.9 10.8H16.7V1.55H7.4V10.8H3.2Z" fill="url(#gW)" stroke="#22a616" stroke-width="1" stroke-linejoin="miter"/></svg>
<div style="left:62px;top:351px;width:123px;height:146px;border:3px solid #f20c0c;box-shadow:2px 2px 3px rgba(0,0,0,.45),inset 2px 2px 3px rgba(0,0,0,.28)"></div>
<svg style="left:180px;top:360px" width="170" height="70" viewBox="180 360 170 70">
<defs><filter id="sh" x="-10%" y="-30%" width="130%" height="180%"><feDropShadow dx="2" dy="2.4" stdDeviation="1.1" flood-color="#000" flood-opacity=".45"/></filter></defs>
<g filter="url(#sh)"><path d="M189.6 418.5 L327 376.1" stroke="#f80a0a" stroke-width="1.7" fill="none"/>
<path d="M335.2 373.5 L324.4 373 L326.6 380.3 Z" fill="#f80a0a"/></g></svg>
</body></html>
